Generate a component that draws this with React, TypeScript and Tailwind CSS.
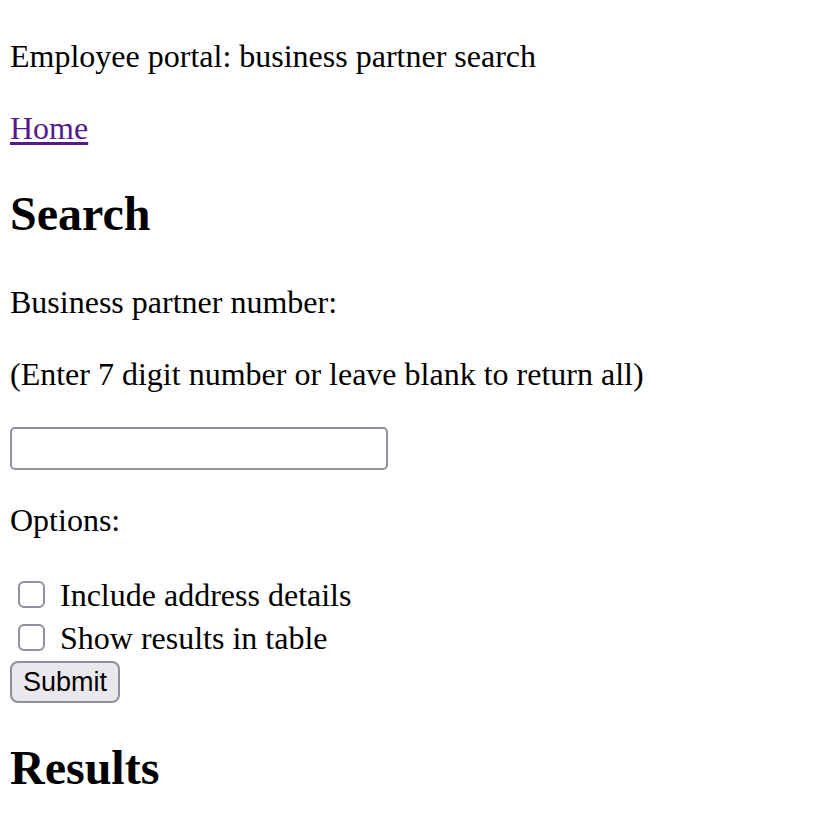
export default function App() {
  return (
    <div className="min-h-screen bg-white px-[10px] pt-[36px] text-black font-['Liberation_Serif','Times_New_Roman',serif] text-[32px] leading-[40px]">
      <p>Employee portal: business partner search</p>
      <p className="mt-[32px]">
        <a href="#" className="text-[#551a8b] underline underline-offset-[3px]">
          Home
        </a>
      </p>

      <section>
        <h1 className="mt-[38px] text-[48px] leading-[55px] font-bold">Search</h1>
        <form onSubmit={(e) => e.preventDefault()}>
          <p className="mt-[41px]">Business partner number:</p>
          <p className="mt-[32px]">(Enter 7 digit number or leave blank to return all)</p>
          <input
            type="text"
            className="mt-[33px] block w-[378px] h-[43px] rounded-[5px] border-2 border-[#8f8f9d] bg-white px-2 text-[26px] outline-none"
          />
          <p className="mt-[30px]">Options:</p>
          <div className="mt-[33px]">
            <label className="flex h-[43px] items-center">
              <span className="ml-[8px] mr-[6px] inline-block h-[27px] w-[27px] rounded-[6px] border-2 border-[#8f8f9d] bg-white" />
              <span className="ml-[9px]">Include address details</span>
            </label>
            <label className="flex h-[43px] items-center">
              <span className="ml-[8px] mr-[6px] inline-block h-[27px] w-[27px] rounded-[6px] border-2 border-[#8f8f9d] bg-white" />
              <span className="ml-[9px]">Show results in table</span>
            </label>
          </div>
          <button
            type="submit"
            className="mt-[2px] block h-[42px] rounded-[8px] border-2 border-[#8f8f9d] bg-[#e9e9ed] px-[11px] font-['Liberation_Sans',Arial,sans-serif] text-[27px] leading-[36px]"
          >
            Submit
          </button>
        </form>
      </section>

      <section>
        <h1 className="mt-[37px] text-[48px] leading-[55px] font-bold">Results</h1>
      </section>
    </div>
  );
}
